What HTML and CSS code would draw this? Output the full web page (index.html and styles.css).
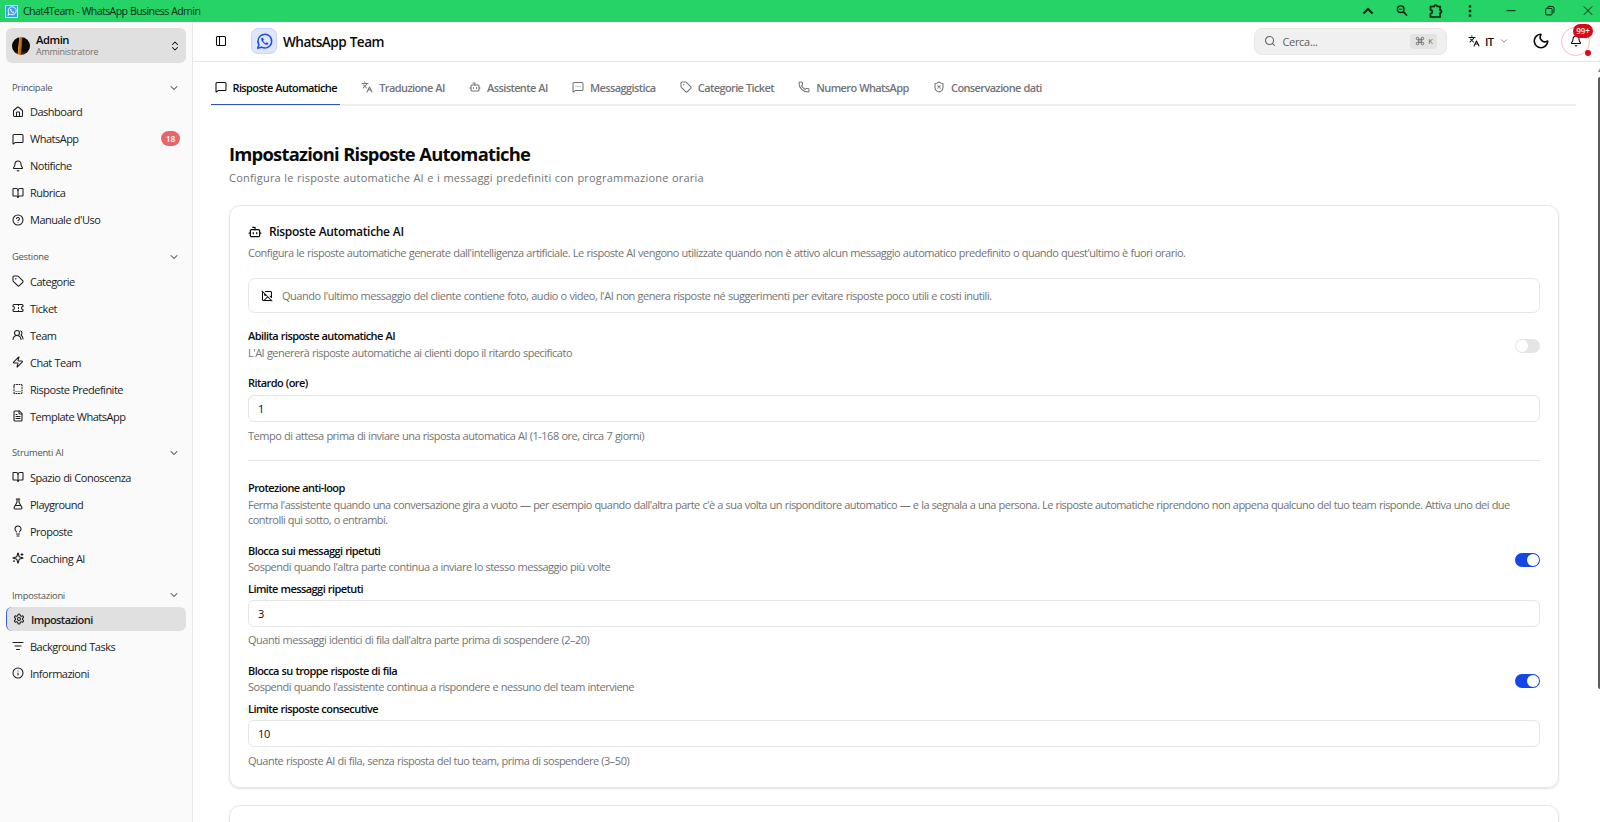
FILE: index.html
```html
<!DOCTYPE html>
<html lang="it">
<head>
    <meta charset="UTF-8">
    <meta name="viewport" content="width=device-width, initial-scale=1.0">
    <title>Chat4Team - WhatsApp Business Admin</title>
    <link rel="stylesheet" href="styles.css">
</head>
<body>
    <!-- Icon set -->
    <svg class="sprite" xmlns="http://www.w3.org/2000/svg">
        <symbol id="i-home" viewBox="0 0 24 24"><path d="M15 21v-8a1 1 0 0 0-1-1h-4a1 1 0 0 0-1 1v8"/><path d="M3 10a2 2 0 0 1 .709-1.528l7-6a2 2 0 0 1 2.582 0l7 6A2 2 0 0 1 21 10v9a2 2 0 0 1-2 2H5a2 2 0 0 1-2-2z"/></symbol>
        <symbol id="i-message" viewBox="0 0 24 24"><path d="M22 17a2 2 0 0 1-2 2H6.8a2 2 0 0 0-1.4.6l-2.2 2.2A.7.7 0 0 1 2 21.300V5a2 2 0 0 1 2-2h16a2 2 0 0 1 2 2z"/></symbol>
        <symbol id="i-message-dots" viewBox="0 0 24 24"><path d="M22 17a2 2 0 0 1-2 2H6.800a2 2 0 0 0-1.400.6l-2.200 2.200A.7.7 0 0 1 2 21.300V5a2 2 0 0 1 2-2h16a2 2 0 0 1 2 2z"/><path d="M12 11h.01M16 11h.01M8 11h.01"/></symbol>
        <symbol id="i-bell" viewBox="0 0 24 24"><path d="M10.268 21a2 2 0 0 0 3.464 0"/><path d="M3.262 15.326A1 1 0 0 0 4 17h16a1 1 0 0 0 .74-1.673C19.410 13.956 18 12.499 18 8A6 6 0 0 0 6 8c0 4.499-1.411 5.956-2.738 7.326"/></symbol>
        <symbol id="i-book" viewBox="0 0 24 24"><path d="M12 7v14"/><path d="M3 18a1 1 0 0 1-1-1V4a1 1 0 0 1 1-1h5a4 4 0 0 1 4 4 4 4 0 0 1 4-4h5a1 1 0 0 1 1 1v13a1 1 0 0 1-1 1h-6a3 3 0 0 0-3 3 3 3 0 0 0-3-3z"/></symbol>
        <symbol id="i-help" viewBox="0 0 24 24"><circle cx="12" cy="12" r="10"/><path d="M9.090 9a3 3 0 0 1 5.830 1c0 2-3 3-3 3"/><path d="M12 17h.01"/></symbol>
        <symbol id="i-tag" viewBox="0 0 24 24"><path d="M12.586 2.586A2 2 0 0 0 11.172 2H4a2 2 0 0 0-2 2v7.172a2 2 0 0 0 .586 1.414l8.704 8.704a2.426 2.426 0 0 0 3.420 0l6.580-6.580a2.426 2.426 0 0 0 0-3.420z"/><circle cx="7.500" cy="7.500" r=".5" fill="currentColor"/></symbol>
        <symbol id="i-ticket" viewBox="0 0 24 24"><path d="M2 9a3 3 0 0 1 0 6v2a2 2 0 0 0 2 2h16a2 2 0 0 0 2-2v-2a3 3 0 0 1 0-6V7a2 2 0 0 0-2-2H4a2 2 0 0 0-2 2Z"/><path d="M13 5v2M13 17v2M13 11v2"/></symbol>
        <symbol id="i-users" viewBox="0 0 24 24"><path d="M18 21a8 8 0 0 0-16 0"/><circle cx="10" cy="8" r="5"/><path d="M22 20c0-3.370-2-6.500-4-8a5 5 0 0 0-.45-8.300"/></symbol>
        <symbol id="i-zap" viewBox="0 0 24 24"><path d="M4 14a1 1 0 0 1-.78-1.630l9.900-10.200a.5.5 0 0 1 .86.46l-1.920 6.020A1 1 0 0 0 13 10h7a1 1 0 0 1 .78 1.630l-9.900 10.200a.5.5 0 0 1-.86-.46l1.920-6.020A1 1 0 0 0 11 14z"/></symbol>
        <symbol id="i-template" viewBox="0 0 24 24"><path d="M4 10V5a2 2 0 0 1 2-2M4 13v2M9 3h2M14 3h2M19 3a2 2 0 0 1 1 2v1M20 9v2M20 14v2M20 19a2 2 0 0 1-2 2M15 21h-2M10 21H8M5 21a2 2 0 0 1-1-2v-1M8 17h.01M12 17h.01M16 17h.01"/></symbol>
        <symbol id="i-file" viewBox="0 0 24 24"><path d="M15 2H6a2 2 0 0 0-2 2v16a2 2 0 0 0 2 2h12a2 2 0 0 0 2-2V7Z"/><path d="M14 2v4a2 2 0 0 0 2 2h4M10 9H8M16 13H8M16 17H8"/></symbol>
        <symbol id="i-flask" viewBox="0 0 24 24"><path d="M14 2v6a2 2 0 0 0 .245.960l5.510 10.080A2 2 0 0 1 18 22H6a2 2 0 0 1-1.755-2.960l5.510-10.080A2 2 0 0 0 10 8V2M6.453 15h11.094M8.500 2h7"/></symbol>
        <symbol id="i-bulb" viewBox="0 0 24 24"><path d="M15 14c.2-1 .7-1.700 1.500-2.500 1-.9 1.500-2.200 1.500-3.500A6 6 0 0 0 6 8c0 1 .2 2.200 1.500 3.500.7.7 1.300 1.500 1.500 2.500M9 18h6M10 22h4"/></symbol>
        <symbol id="i-sparkles" viewBox="0 0 24 24"><path d="M9.937 15.500A2 2 0 0 0 8.500 14.063l-6.135-1.582a.5.5 0 0 1 0-.962L8.500 9.936A2 2 0 0 0 9.937 8.500l1.582-6.135a.5.5 0 0 1 .963 0L14.063 8.500A2 2 0 0 0 15.500 9.937l6.135 1.581a.5.5 0 0 1 0 .964L15.500 14.063a2 2 0 0 0-1.437 1.437l-1.582 6.135a.5.5 0 0 1-.963 0z"/><path d="M20 3v4M22 5h-4M4 17v2M5 18H3"/></symbol>
        <symbol id="i-settings" viewBox="0 0 24 24"><path d="M12.220 2h-.44a2 2 0 0 0-2 2v.18a2 2 0 0 1-1 1.730l-.43.25a2 2 0 0 1-2 0l-.15-.08a2 2 0 0 0-2.730.73l-.22.38a2 2 0 0 0 .73 2.730l.15.1a2 2 0 0 1 1 1.720v.51a2 2 0 0 1-1 1.740l-.15.09a2 2 0 0 0-.73 2.730l.22.38a2 2 0 0 0 2.730.73l.15-.08a2 2 0 0 1 2 0l.43.25a2 2 0 0 1 1 1.730V20a2 2 0 0 0 2 2h.44a2 2 0 0 0 2-2v-.18a2 2 0 0 1 1-1.730l.43-.25a2 2 0 0 1 2 0l.15.08a2 2 0 0 0 2.730-.73l.22-.39a2 2 0 0 0-.73-2.730l-.15-.08a2 2 0 0 1-1-1.740v-.5a2 2 0 0 1 1-1.740l.15-.09a2 2 0 0 0 .73-2.730l-.22-.38a2 2 0 0 0-2.730-.73l-.15.08a2 2 0 0 1-2 0l-.43-.25a2 2 0 0 1-1-1.730V4a2 2 0 0 0-2-2z"/><circle cx="12" cy="12" r="3"/></symbol>
        <symbol id="i-filter" viewBox="0 0 24 24"><path d="M2 5h20M6 12h12M9 19h6"/></symbol>
        <symbol id="i-info" viewBox="0 0 24 24"><circle cx="12" cy="12" r="10"/><path d="M12 16v-4M12 8h.01"/></symbol>
        <symbol id="i-down" viewBox="0 0 24 24"><path d="m6 9 6 6 6-6"/></symbol>
        <symbol id="i-updown" viewBox="0 0 24 24"><path d="m7 15 5 5 5-5M7 9l5-5 5 5"/></symbol>
        <symbol id="i-panel" viewBox="0 0 24 24"><rect x="3" y="3" width="18" height="18" rx="2"/><path d="M9 3v18"/></symbol>
        <symbol id="i-whatsapp" viewBox="0 0 24 24"><path d="M2.500 21.500l1.500-5.200A9.700 9.700 0 1 1 7.700 20z"/><path d="M8.300 6.800c-1.500 1-1.200 3 .3 5.200 1.700 2.500 4.300 4.500 6.500 4.500 1.400 0 2.300-.9 2.300-2.200l-2.500-1.300-1.400 1.300c-1.400-.5-2.900-1.900-3.500-3.400l1.100-1.200-1.100-2.800z" class="fill"/></symbol>
        <symbol id="i-lang" viewBox="0 0 24 24"><path d="m5 8 6 6M4 14l6-6 2-3M2 5h12M7 2h1M22 22l-5-10-5 10M14 18h6"/></symbol>
        <symbol id="i-bot" viewBox="0 0 24 24"><path d="M12 8V4H8"/><rect x="4" y="8" width="16" height="12" rx="2"/><path d="M2 14h2M20 14h2M15 13v2M9 13v2"/></symbol>
        <symbol id="i-phone" viewBox="0 0 24 24"><path d="M13.832 16.568a1 1 0 0 0 1.213-.303l.355-.465A2 2 0 0 1 17 15h3a2 2 0 0 1 2 2v3a2 2 0 0 1-2 2A18 18 0 0 1 2 4a2 2 0 0 1 2-2h3a2 2 0 0 1 2 2v3a2 2 0 0 1-.8 1.600l-.468.351a1 1 0 0 0-.292 1.233 14 14 0 0 0 6.392 6.384"/></symbol>
        <symbol id="i-shield" viewBox="0 0 24 24"><path d="M20 13c0 5-3.500 7.500-7.660 8.950a1 1 0 0 1-.67-.01C7.500 20.500 4 18 4 13V6a1 1 0 0 1 1-1c2 0 4.500-1.200 6.240-2.720a1.170 1.170 0 0 1 1.520 0C14.510 3.810 17 5 19 5a1 1 0 0 1 1 1zM14.500 9.500l-5 5M9.500 9.500l5 5"/></symbol>
        <symbol id="i-image-off" viewBox="0 0 24 24"><path d="M2 2l20 20M10.410 10.410a2 2 0 1 1-2.830-2.830M13.500 13.500 6 21M18 12l3 3M3.590 3.590A2 2 0 0 0 3 5v14a2 2 0 0 0 2 2h14a2 2 0 0 0 1.410-.59M21 15V5a2 2 0 0 0-2-2H9"/></symbol>
        <symbol id="i-search" viewBox="0 0 24 24"><circle cx="11" cy="11" r="8"/><path d="m21 21-4.300-4.300"/></symbol>
        <symbol id="i-moon" viewBox="0 0 24 24"><path d="M20.985 12.486a9 9 0 1 1-9.473-9.472c.405-.022.617.46.402.803a6 6 0 0 0 8.268 8.268c.344-.215.825-.004.803.401"/></symbol>
        <symbol id="i-command" viewBox="0 0 24 24"><path d="M15 6v12a3 3 0 1 0 3-3H6a3 3 0 1 0 3 3V6a3 3 0 1 0-3 3h12a3 3 0 1 0-3-3"/></symbol>
    </svg>

    <div class="titlebar">
        <span class="app-icon"><svg class="icon"><use href="#i-whatsapp"/></svg></span>
        <span class="app-title">Chat4Team - WhatsApp Business Admin</span>
        <div class="window-tools">
            <svg viewBox="0 0 16 16"><path d="M3.500 10.500 8 6l4.500 4.500" stroke-width="2"/></svg>
            <svg viewBox="0 0 16 16"><circle cx="6.700" cy="6.200" r="3.300" stroke-width="1.400"/><path d="M9.200 8.700l3.800 3.800" stroke-width="1.700"/><path d="M5 6.200h3.400"/></svg>
            <svg viewBox="0 0 16 16"><path d="M2.500 3.500h3.700a1.500 1.500 0 0 1 3 0h2.900v3.600a1.500 1.500 0 0 1 0 3V14H2.500v-3.300c2.400-.3 2.400-3.500 0-3.800z" stroke-width="1.700"/></svg>
            <svg viewBox="0 0 16 16"><path d="M8 2.200v2.400M8 6.800v2.400M8 11.400v2.400" stroke-width="2.400"/></svg>
        </div>
        <div class="window-buttons">
            <svg viewBox="0 0 16 16"><path d="M3.500 7.700h9"/></svg>
            <svg viewBox="0 0 16 16"><rect x="3.600" y="5.400" width="6.500" height="6.500" rx="1"/><path d="M5.800 5V4.200q0-.8.8-.8H10q2 0 2 2v3.300q0 1-.9 1.100"/></svg>
            <svg viewBox="0 0 16 16"><path d="M3.800 3.400l8.400 8.400M12.200 3.400l-8.400 8.400"/></svg>
        </div>
    </div>

    <div class="app">
        <aside class="sidebar">
            <div class="user-card">
                <span class="avatar"></span>
                <div class="user-info">
                    <div class="user-name">Admin</div>
                    <div class="user-role">Amministratore</div>
                </div>
                <svg class="icon"><use href="#i-updown"/></svg>
            </div>

            <nav class="group">
                <div class="group-title">Principale <svg class="icon"><use href="#i-down"/></svg></div>
                <a class="item"><svg class="icon"><use href="#i-home"/></svg>Dashboard</a>
                <a class="item"><svg class="icon"><use href="#i-message"/></svg>WhatsApp<span class="count">18</span></a>
                <a class="item"><svg class="icon"><use href="#i-bell"/></svg>Notifiche</a>
                <a class="item"><svg class="icon"><use href="#i-book"/></svg>Rubrica</a>
                <a class="item"><svg class="icon"><use href="#i-help"/></svg>Manuale d'Uso</a>
            </nav>
            <nav class="group">
                <div class="group-title">Gestione <svg class="icon"><use href="#i-down"/></svg></div>
                <a class="item"><svg class="icon"><use href="#i-tag"/></svg>Categorie</a>
                <a class="item"><svg class="icon"><use href="#i-ticket"/></svg>Ticket</a>
                <a class="item"><svg class="icon"><use href="#i-users"/></svg>Team</a>
                <a class="item"><svg class="icon"><use href="#i-zap"/></svg>Chat Team</a>
                <a class="item"><svg class="icon"><use href="#i-template"/></svg>Risposte Predefinite</a>
                <a class="item"><svg class="icon"><use href="#i-file"/></svg>Template WhatsApp</a>
            </nav>
            <nav class="group">
                <div class="group-title">Strumenti AI <svg class="icon"><use href="#i-down"/></svg></div>
                <a class="item"><svg class="icon"><use href="#i-book"/></svg>Spazio di Conoscenza</a>
                <a class="item"><svg class="icon"><use href="#i-flask"/></svg>Playground</a>
                <a class="item"><svg class="icon"><use href="#i-bulb"/></svg>Proposte</a>
                <a class="item"><svg class="icon"><use href="#i-sparkles"/></svg>Coaching AI</a>
            </nav>
            <nav class="group">
                <div class="group-title">Impostazioni <svg class="icon"><use href="#i-down"/></svg></div>
                <a class="item active"><svg class="icon"><use href="#i-settings"/></svg>Impostazioni</a>
                <a class="item"><svg class="icon"><use href="#i-filter"/></svg>Background Tasks</a>
                <a class="item"><svg class="icon"><use href="#i-info"/></svg>Informazioni</a>
            </nav>
        </aside>

        <div class="main">
            <header class="header">
                <svg class="icon panel-icon"><use href="#i-panel"/></svg>
                <span class="logo"><svg class="icon"><use href="#i-whatsapp"/></svg></span>
                <span class="brand">WhatsApp Team</span>
                <div class="search">
                    <svg class="icon"><use href="#i-search"/></svg>
                    <span>Cerca...</span>
                    <kbd><svg class="icon"><use href="#i-command"/></svg>K</kbd>
                </div>
                <div class="lang">
                    <svg class="icon"><use href="#i-lang"/></svg>
                    <span>IT</span>
                    <svg class="icon chevron"><use href="#i-down"/></svg>
                </div>
                <svg class="icon moon"><use href="#i-moon"/></svg>
                <div class="bell">
                    <svg class="icon"><use href="#i-bell"/></svg>
                    <span class="bell-count">99+</span>
                    <span class="bell-dot"></span>
                </div>
            </header>

            <div class="scroll-area">
                <div class="scroll-up"></div>
                <div class="scrollbar"></div>
                <div class="tabs">
                    <a class="tab selected"><svg class="icon"><use href="#i-message"/></svg>Risposte Automatiche</a>
                    <a class="tab"><svg class="icon"><use href="#i-lang"/></svg>Traduzione AI</a>
                    <a class="tab"><svg class="icon"><use href="#i-bot"/></svg>Assistente AI</a>
                    <a class="tab"><svg class="icon"><use href="#i-message-dots"/></svg>Messaggistica</a>
                    <a class="tab"><svg class="icon"><use href="#i-tag"/></svg>Categorie Ticket</a>
                    <a class="tab"><svg class="icon"><use href="#i-phone"/></svg>Numero WhatsApp</a>
                    <a class="tab"><svg class="icon"><use href="#i-shield"/></svg>Conservazione dati</a>
                </div>

                <div class="content">
                    <h1>Impostazioni Risposte Automatiche</h1>
                    <p class="subtitle">Configura le risposte automatiche AI e i messaggi predefiniti con programmazione oraria</p>

                    <section class="card">
                        <h2><svg class="icon"><use href="#i-bot"/></svg>Risposte Automatiche AI</h2>
                        <p class="text intro">Configura le risposte automatiche generate dall'intelligenza artificiale. Le risposte AI vengono utilizzate quando non è attivo alcun messaggio automatico predefinito o quando quest'ultimo è fuori orario.</p>

                        <div class="notice">
                            <svg class="icon"><use href="#i-image-off"/></svg>
                            <span class="text">Quando l'ultimo messaggio del cliente contiene foto, audio o video, l'AI non genera risposte né suggerimenti per evitare risposte poco utili e costi inutili.</span>
                        </div>

                        <div class="setting first">
                            <div>
                                <div class="label">Abilita risposte automatiche AI</div>
                                <p class="text">L'AI genererà risposte automatiche ai clienti dopo il ritardo specificato</p>
                            </div>
                            <span class="switch"></span>
                        </div>
                        <div class="field delay">
                            <label class="label" for="delay">Ritardo (ore)</label>
                            <input type="text" id="delay" value="1">
                            <p class="text">Tempo di attesa prima di inviare una risposta automatica AI (1-168 ore, circa 7 giorni)</p>
                        </div>

                        <div class="loop">
                            <div class="label">Protezione anti-loop</div>
                            <p class="text long">Ferma l'assistente quando una conversazione gira a vuoto — per esempio quando dall'altra parte c'è a sua volta un risponditore automatico — e la segnala a una persona. Le risposte automatiche riprendono non appena qualcuno del tuo team risponde. Attiva uno dei due controlli qui sotto, o entrambi.</p>
                        </div>

                        <div class="setting">
                            <div>
                                <div class="label">Blocca sui messaggi ripetuti</div>
                                <p class="text">Sospendi quando l'altra parte continua a inviare lo stesso messaggio più volte</p>
                            </div>
                            <span class="switch on"></span>
                        </div>
                        <div class="field">
                            <label class="label" for="repeated">Limite messaggi ripetuti</label>
                            <input type="text" id="repeated" value="3">
                            <p class="text">Quanti messaggi identici di fila dall'altra parte prima di sospendere (2–20)</p>
                        </div>

                        <div class="setting">
                            <div>
                                <div class="label">Blocca su troppe risposte di fila</div>
                                <p class="text">Sospendi quando l'assistente continua a rispondere e nessuno del team interviene</p>
                            </div>
                            <span class="switch on"></span>
                        </div>
                        <div class="field">
                            <label class="label" for="consecutive">Limite risposte consecutive</label>
                            <input type="text" id="consecutive" value="10">
                            <p class="text">Quante risposte AI di fila, senza risposta del tuo team, prima di sospendere (3–50)</p>
                        </div>
                    </section>

                    <section class="card next"></section>
                </div>
            </div>
        </div>
    </div>
</body>
</html>
```

FILE: styles.css
```css
* {
    box-sizing: border-box;
}
body {
    margin: 0;
    height: 822px;
    overflow: hidden;
    display: flex;
    flex-direction: column;
    font-family: "Open Sans", "Noto Sans", sans-serif;
    font-size: 11px;
    letter-spacing: -0.5px;
    word-spacing: 0.35px;
    color: #0a0a0a;
    background: #fff;
}
h1, h2, p {
    margin: 0;
}
.sprite {
    display: none;
}
.icon {
    width: 12px;
    height: 12px;
    flex: none;
    fill: none;
    stroke: currentColor;
    stroke-width: 2.1;
    stroke-linecap: round;
    stroke-linejoin: round;
}
.fill {
    fill: currentColor;
    stroke: none;
}

/* Title bar */
.titlebar {
    height: 22px;
    flex: none;
    display: flex;
    align-items: center;
    padding: 0 4px 0 5px;
    background: #25d366;
    color: #062b14;
}
.app-icon {
    width: 13px;
    height: 13px;
    display: flex;
    align-items: center;
    justify-content: center;
    background: #3f9bf0;
    border: 1px solid #c9eafa;
    color: #fff;
}
.app-icon .icon {
    width: 10px;
    height: 10px;
}
.app-title {
    margin-left: 5px;
    font-size: 10.5px;
    line-height: 20px;
    letter-spacing: -0.56px;
}
.window-tools, .window-buttons {
    display: flex;
    align-items: center;
}
.window-tools {
    margin-left: auto;
    gap: 17.7px;
}
.window-buttons {
    margin-left: 25.5px;
    gap: 22.5px;
}
.window-tools svg, .window-buttons svg {
    width: 16px;
    height: 16px;
    fill: none;
    stroke: #06230f;
}

/* Sidebar */
.app {
    flex: 1;
    min-height: 0;
    display: flex;
}
.sidebar {
    width: 193px;
    flex: none;
    padding: 6px 6px 0;
    background: #fafafa;
    border-right: 1px solid #e8e8e8;
}
.user-card {
    height: 35px;
    display: flex;
    align-items: center;
    margin-bottom: 12.5px;
    padding: 0 5px 0 6px;
    background: #e0e0e0;
    border-radius: 6px;
}
.avatar {
    width: 18px;
    height: 18px;
    border-radius: 50%;
    background: linear-gradient(95deg, transparent 35%, #d98a2b 38%, #a85a14 52%, transparent 56%), linear-gradient(#0c0906 75%, #4a3a34);
}
.user-info {
    flex: 1;
    margin-left: 6px;
}
.user-name {
    font-size: 11.2px;
    line-height: 12px;
    font-weight: 600;
    letter-spacing: -0.45px;
}
.user-role {
    font-size: 9px;
    line-height: 11px;
    letter-spacing: -0.26px;
    color: #737373;
}
.group {
    margin-bottom: 12.8px;
}
.group-title {
    height: 24px;
    display: flex;
    align-items: center;
    justify-content: space-between;
    margin-bottom: 0.4px;
    padding: 0 6px;
    font-size: 9.4px;
    letter-spacing: -0.27px;
    color: #525252;
}
.item {
    height: 24px;
    display: flex;
    align-items: center;
    gap: 6px;
    margin-bottom: 3px;
    padding: 0 6px;
    border-radius: 6px;
    color: #1c1c1c;
}
.group .item:last-child {
    margin-bottom: 0;
}
.item.active {
    background: #e0e0e0;
    border-left: 1px solid #3b63d8;
    font-weight: 600;
    letter-spacing: -0.58px;
}
.count {
    width: 19px;
    height: 15px;
    margin-left: auto;
    border-radius: 8px;
    background: #e8666a;
    color: #fff;
    font-size: 8.5px;
    font-weight: 600;
    line-height: 15px;
    letter-spacing: -0.2px;
    text-align: center;
}

/* Header */
.main {
    flex: 1;
    min-width: 0;
    display: flex;
    flex-direction: column;
}
.header {
    height: 40px;
    flex: none;
    display: flex;
    align-items: center;
    padding: 0 10px 1px 22px;
    border-bottom: 1px solid #e6e6e6;
}
.logo {
    width: 26px;
    height: 26px;
    display: flex;
    align-items: center;
    justify-content: center;
    margin-left: 24px;
    background: #dfe5fb;
    border: 1px solid #c9d4f8;
    border-radius: 7px;
    color: #1d4ed8;
}
.logo .icon {
    width: 17px;
    height: 17px;
}
.brand {
    margin-left: 6px;
    font-size: 13.6px;
    font-weight: 600;
}
.search {
    width: 193px;
    height: 27px;
    display: flex;
    align-items: center;
    gap: 6px;
    margin-left: auto;
    padding: 0 9px;
    background: #f0f0f0;
    border: 1px solid #e8e8e8;
    border-radius: 8px;
    letter-spacing: -0.3px;
    color: #5f5f5f;
}
.search kbd {
    height: 15px;
    display: flex;
    align-items: center;
    gap: 3px;
    margin-left: auto;
    padding: 0 5px;
    border-radius: 3px;
    background: #e3e3e3;
    font-family: inherit;
    font-size: 7.5px;
}
.search kbd .icon {
    width: 10px;
    height: 10px;
}
.lang {
    display: flex;
    align-items: center;
    margin-left: 21px;
    gap: 4.5px;
    font-weight: 600;
}
.lang .chevron {
    width: 10px;
    height: 10px;
    margin-left: 1px;
    color: #777;
}
.moon {
    width: 18px;
    height: 18px;
    margin-left: 23px;
}
.bell {
    position: relative;
    width: 29px;
    height: 29px;
    display: flex;
    align-items: center;
    justify-content: center;
    margin-left: 11px;
    border: 1px solid #fbb9bf;
    border-radius: 50%;
}
.bell-count {
    position: absolute;
    top: -4px;
    left: 11px;
    width: 20px;
    height: 14px;
    border-radius: 7px;
    background: #dc0814;
    color: #fff;
    font-size: 8px;
    font-weight: 600;
    line-height: 14px;
    letter-spacing: 0;
    text-align: center;
}
.bell-dot {
    position: absolute;
    right: -2px;
    bottom: -1px;
    width: 6px;
    height: 6px;
    border-radius: 50%;
    background: #dc0814;
}

/* Tabs */
.scroll-area {
    position: relative;
    flex: 1;
    min-height: 0;
    overflow: hidden;
    padding: 9px 24px 0 18px;
}
.scroll-up {
    position: absolute;
    top: 6px;
    right: 0;
    width: 2px;
    height: 4px;
    background: #8a8a8a;
    clip-path: polygon(100% 0, 100% 100%, 0 100%);
}
.scrollbar {
    position: absolute;
    top: 15px;
    right: 0;
    width: 2px;
    height: 612px;
    border-radius: 2px 0 0 2px;
    background: #5c5c5c;
}
.tabs {
    height: 35px;
    display: flex;
    border-bottom: 2px solid #efefef;
}
.tab {
    height: 34px;
    display: flex;
    align-items: center;
    gap: 6px;
    margin-right: 17.3px;
    padding: 0 3.5px 2px;
    font-weight: 600;
    letter-spacing: -0.61px;
    white-space: nowrap;
    color: #737378;
}
.tab.selected {
    padding-bottom: 1px;
    color: #0a0a0a;
    border-bottom: 1px solid #2f55bd;
}

/* Page content */
.content {
    padding: 35px 17px 0 18px;
}
h1 {
    font-size: 18.4px;
    line-height: 26px;
    font-weight: 700;
    letter-spacing: -0.77px;
}
.subtitle {
    line-height: 16px;
    margin: 3px 0 19px;
    letter-spacing: 0.2px;
    color: #737373;
}
.card {
    height: 583px;
    margin-bottom: 17px;
    padding: 17px 18px 0;
    border: 1px solid #e6e6e6;
    border-radius: 11px;
    box-shadow: 0 1px 2px rgba(0, 0, 0, 0.12);
}
h2 {
    display: flex;
    align-items: center;
    gap: 7px;
    font-size: 12px;
    line-height: 18px;
    font-weight: 600;
    letter-spacing: -0.33px;
}
h2 .icon {
    width: 14px;
    height: 14px;
}
.text {
    line-height: 16px;
    color: #737373;
}
.intro {
    margin: 4px 0 17px;
}
.notice {
    height: 35px;
    display: flex;
    align-items: center;
    gap: 9px;
    padding: 0 12px;
    border: 1px solid #e6e6e6;
    border-radius: 7px;
}
.notice .text {
    letter-spacing: -0.47px;
}
.label {
    display: block;
    line-height: 16px;
    font-weight: 600;
    letter-spacing: -0.57px;
}
.setting {
    display: flex;
    align-items: center;
    justify-content: space-between;
    margin-top: 15px;
}
.setting.first .text {
    margin-top: 1px;
}
.switch {
    width: 25px;
    height: 14px;
    display: flex;
    margin-top: 3px;
    padding: 1px;
    border-radius: 7px;
    background: #e5e5e5;
}
.switch::after {
    content: "";
    width: 12px;
    height: 12px;
    border-radius: 50%;
    background: #fff;
}
.switch.on {
    justify-content: flex-end;
    background: #1447e6;
}
.field {
    margin-top: 6px;
}
.field.delay {
    margin-top: 14px;
}
.field input {
    display: block;
    width: 100%;
    height: 27px;
    margin: 3px 0 5.5px;
    padding: 0 9px;
    border: 1px solid #e5e5e5;
    border-radius: 6px;
    font-family: inherit;
    font-size: 11px;
    letter-spacing: -0.2px;
    color: #0a0a0a;
}
.field.delay input {
    margin: 3.5px 0 6.5px;
}
.loop {
    margin-top: 16px;
    padding-top: 19px;
    border-top: 1px solid #e5e5e5;
}
.long {
    margin-top: 1px;
    line-height: 15.3px;
    letter-spacing: -0.54px;
}
```
